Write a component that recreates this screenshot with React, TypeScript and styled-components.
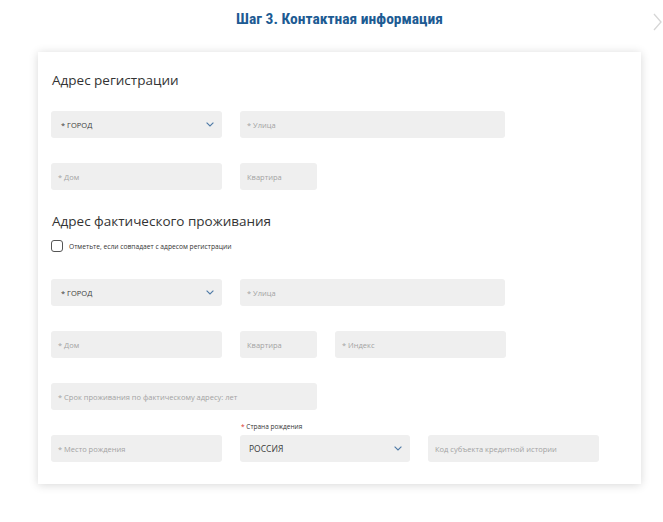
import React from "react";
import styled, { createGlobalStyle } from "styled-components";

const GlobalStyle = createGlobalStyle`
  body {
    margin: 0;
    background: #ffffff;
    font-family: "Open Sans", "Noto Sans", sans-serif;
  }
`;

const Page = styled.div`
  width: 663px;
  height: 522px;
  position: relative;
  padding: 0 0 0 38px;
  box-sizing: border-box;
`;

const Title = styled.h1`
  width: 603px;
  margin: 0;
  padding-top: 10px;
  height: 52px;
  box-sizing: border-box;
  text-align: center;
  font-family: "Liberation Sans Narrow", "Roboto Condensed", "Liberation Sans", sans-serif;
  font-weight: 700;
  font-size: 15.5px;
  line-height: 18px;
  color: #1d5b93;
`;

const NextArrow = styled.div`
  position: absolute;
  top: 13px;
  right: 0;
  width: 10px;
  height: 18px;
`;

const Card = styled.div`
  width: 603px;
  height: 432px;
  box-sizing: border-box;
  background: #fff;
  box-shadow: 0 1px 9px rgba(0, 0, 0, 0.16);
  padding: 18px 13px 0;
`;

const Heading = styled.h2<{ $mt?: number }>`
  margin: ${(p) => p.$mt ?? 0}px 0 0 1px;
  font-family: "Open Sans", "Noto Sans", sans-serif;
  font-weight: 400;
  font-size: 13.5px;
  line-height: 20px;
  color: #333;
`;

const Row = styled.div<{ $mt: number }>`
  display: flex;
  gap: 18px;
  margin-top: ${(p) => p.$mt}px;
`;

const Field = styled.div<{ $w: number }>`
  width: ${(p) => p.$w}px;
  height: 27px;
  background: #efefef;
  border-radius: 3px;
  display: flex;
  align-items: center;
  justify-content: space-between;
  padding: 0 8px 0 7px;
  box-sizing: border-box;
  font-size: 7.5px;
  color: #a3a3a3;
  white-space: nowrap;
`;

const SelectText = styled.span<{ $big?: boolean }>`
  color: #3a3a3a;
  font-size: ${(p) => (p.$big ? 8.5 : 7.5)}px;
  padding-left: ${(p) => (p.$big ? 2 : 3)}px;
`;

const Column = styled.div`
  display: flex;
  flex-direction: column;
`;

const FieldLabel = styled.div`
  font-size: 6.5px;
  line-height: 8px;
  color: #333;
  margin: -12px 0 4px 1px;
`;

const Req = styled.span`
  color: #d9302c;
`;

const CheckRow = styled.label`
  display: flex;
  align-items: center;
  gap: 6px;
  margin: 9px 0 0 0;
  font-size: 6.7px;
  color: #333;
`;

const Box = styled.span`
  width: 10px;
  height: 10px;
  border: 1px solid #555;
  border-radius: 3px;
  display: inline-block;
`;

const Chevron = () => (
  <svg width="8" height="5" viewBox="0 0 8 5">
    <path d="M0.6 0.6 L4 4 L7.4 0.6" fill="none" stroke="#4f7aa6" strokeWidth="1.1" />
  </svg>
);

const Select = ({ w, text, big }: { w: number; text: string; big?: boolean }) => (
  <Field $w={w}>
    <SelectText $big={big}>{text}</SelectText>
    <Chevron />
  </Field>
);

const Input = ({ w, text }: { w: number; text: string }) => <Field $w={w}>{text}</Field>;

export default function App() {
  return (
    <>
      <GlobalStyle />
      <Page>
        <Title>Шаг 3. Контактная информация</Title>
        <NextArrow>
          <svg width="10" height="18" viewBox="0 0 10 18">
            <path d="M1 1 L8 9 L1 17" fill="none" stroke="#d6d6d6" strokeWidth="1.3" />
          </svg>
        </NextArrow>
        <Card>
          <Heading>Адрес регистрации</Heading>
          <Row $mt={21}>
            <Select w={171} text="* ГОРОД" />
            <Input w={265} text="* Улица" />
          </Row>
          <Row $mt={25}>
            <Input w={171} text="* Дом" />
            <Input w={77} text="Квартира" />
          </Row>
          <Heading $mt={21}>Адрес фактического проживания</Heading>
          <CheckRow>
            <Box />
            Отметьте, если совпадает с адресом регистрации
          </CheckRow>
          <Row $mt={27}>
            <Select w={171} text="* ГОРОД" />
            <Input w={265} text="* Улица" />
          </Row>
          <Row $mt={25}>
            <Input w={171} text="* Дом" />
            <Input w={77} text="Квартира" />
            <Input w={171} text="* Индекс" />
          </Row>
          <Row $mt={25}>
            <Input w={266} text="* Срок проживания по фактическому адресу: лет" />
          </Row>
          <Row $mt={25}>
            <Input w={171} text="* Место рождения" />
            <Column>
              <FieldLabel>
                <Req>*</Req> Страна рождения
              </FieldLabel>
              <Select w={170} text="РОССИЯ" big />
            </Column>
            <Input w={171} text="Код субъекта кредитной истории" />
          </Row>
        </Card>
      </Page>
    </>
  );
}
